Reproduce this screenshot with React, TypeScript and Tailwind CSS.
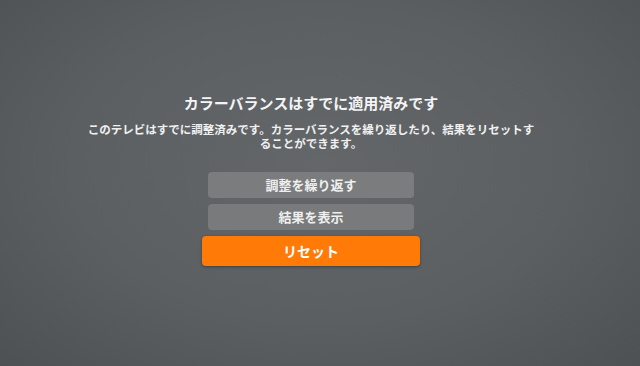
export default function App() {
  return (
    <div
      className="w-[640px] h-[366px] overflow-hidden bg-[radial-gradient(ellipse_at_50%_45%,#63676a_0%,#5b5f62_55%,#4d5154_100%)] text-white"
      style={{ fontFamily: '"Noto Sans CJK JP", "Noto Sans", sans-serif' }}
    >
      <div className="flex flex-col items-center pt-[93px] pr-[18px]">
        <h1 className="text-[15px] leading-[20px] font-bold text-[#f4f4f4]">
          カラーバランスはすでに適用済みです
        </h1>
        <p className="mt-[9px] text-[11.5px] leading-[14px] font-bold text-center text-[#f0f0f0]">
          このテレビはすでに調整済みです。カラーバランスを繰り返したり、結果をリセットす
          <br />
          ることができます。
        </p>

        <div className="mt-[22px] flex flex-col items-center gap-[6px]">
          <button className="w-[206px] h-[26px] rounded-[4px] bg-[#7b7c7d] text-[13px] font-bold text-[#efefef]">
            調整を繰り返す
          </button>
          <button className="w-[206px] h-[26px] rounded-[4px] bg-[#797a7b] text-[13px] font-bold text-[#efefef]">
            結果を表示
          </button>
          <button className="w-[218px] h-[30px] rounded-[4px] bg-[#ff7a06] text-[14px] font-bold text-white shadow-[0_1px_3px_rgba(0,0,0,0.35)]">
            リセット
          </button>
        </div>
      </div>
    </div>
  );
}
